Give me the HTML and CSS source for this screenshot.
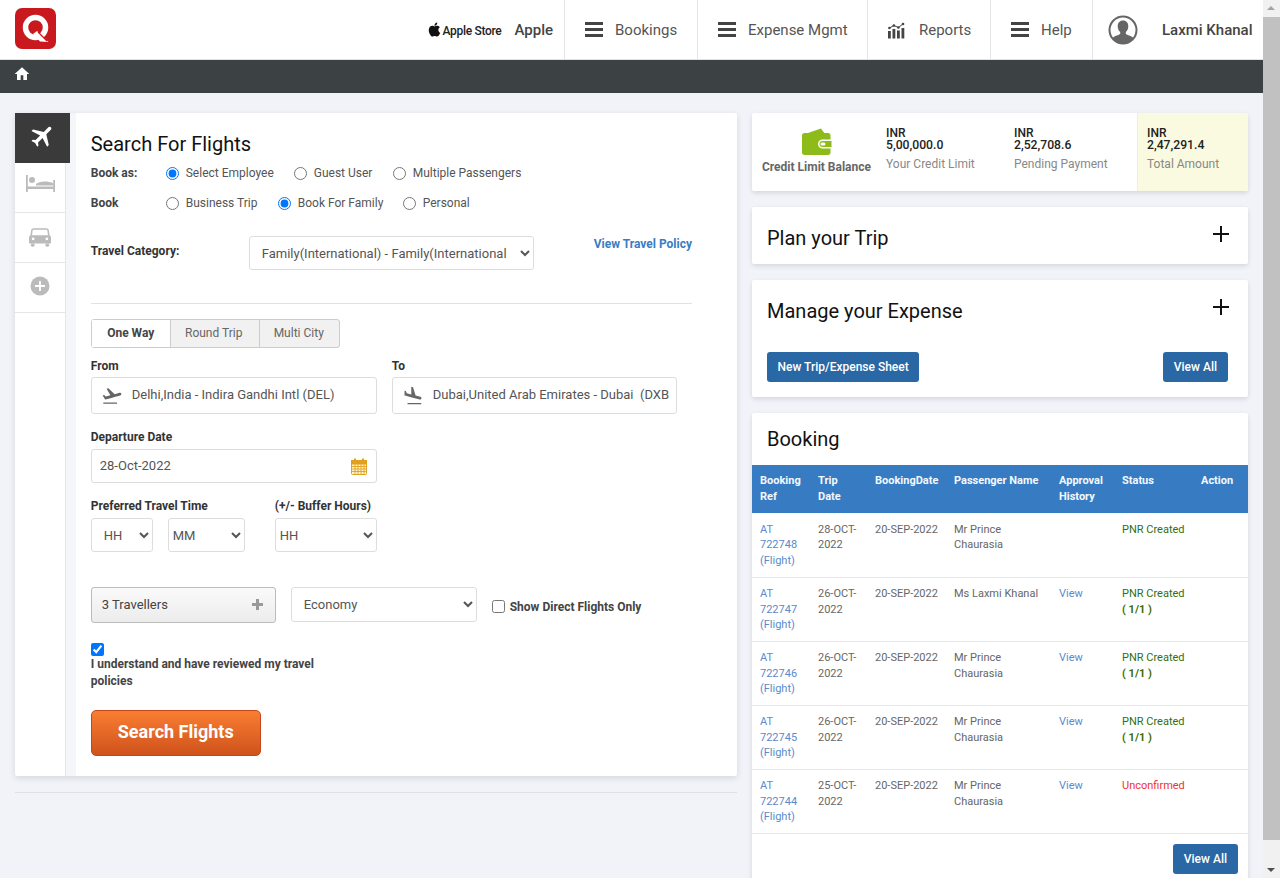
FILE: index.html
```html
<!DOCTYPE html>
<html>
<head>
  <title>Search For Flights</title>
  <link rel="stylesheet" href="styles.css">
</head>
<body>
<div class="page">
  <header class="topbar">
    <div class="logo">
      <svg width="41" height="41" viewBox="0 0 41 41">
        <rect width="41" height="41" rx="7" fill="#c9191e"/>
        <circle cx="20.500" cy="19.500" r="10" fill="none" stroke="#fff" stroke-width="5.500"/>
        <path d="M22 23 L33.500 34 L25 33.500 L18 26 Z" fill="#fff"/>
        <path d="M23 24 L32 33" stroke="#c9191e" stroke-width="1.300"/>
      </svg>
    </div>
    <nav class="nav">
      <div class="nav-client">
        <svg width="17" height="17" viewBox="0 0 24 24" fill="#111"><path d="M18.710 19.500c-.83 1.240-1.710 2.450-3.050 2.470-1.340.03-1.770-.79-3.290-.79-1.530 0-2 .77-3.270.82-1.310.05-2.300-1.320-3.140-2.530C4.250 17 2.940 12.450 4.700 9.390c.87-1.520 2.430-2.480 4.120-2.510 1.280-.02 2.500.87 3.290.87.78 0 2.260-1.070 3.810-.91.65.03 2.470.26 3.640 1.980-.09.06-2.170 1.280-2.150 3.810.03 3.020 2.650 4.030 2.680 4.040-.03.07-.42 1.440-1.380 2.830M13 3.500c.73-.83 1.940-1.460 2.940-1.500.13 1.170-.34 2.350-1.040 3.190-.69.85-1.830 1.510-2.950 1.420-.15-1.150.41-2.350 1.050-3.110z"/></svg>
        <span class="store-name">Apple Store</span>
        <span class="client-name">Apple</span>
      </div>
      <a class="nav-item nav-bookings"><span class="bars"></span>Bookings</a>
      <a class="nav-item nav-expense"><span class="bars"></span>Expense Mgmt</a>
      <a class="nav-item nav-reports">
        <svg class="nav-icon" width="19" height="18" viewBox="0 0 19 18" fill="#444">
          <rect x="1" y="10" width="2.800" height="7.500"/><rect x="5.500" y="8" width="2.800" height="9.500"/><rect x="10" y="9.500" width="2.800" height="8"/><rect x="14.500" y="7" width="2.800" height="10.500"/>
          <path d="M2.400 7 L6.900 4.500 L11.400 6.500 L16 3" fill="none" stroke="#444" stroke-width="1"/>
          <circle cx="2.400" cy="7" r="1.300"/><circle cx="6.900" cy="4.500" r="1.300"/><circle cx="11.400" cy="6.500" r="1.300"/><circle cx="16" cy="3" r="1.300"/>
        </svg>Reports</a>
      <a class="nav-item nav-help"><span class="bars"></span>Help</a>
      <div class="nav-user">
        <svg width="30" height="30" viewBox="0 0 30 30">
          <circle cx="15" cy="15" r="13.500" fill="#fff" stroke="#666" stroke-width="2"/>
          <path d="M15 5.500c3.400 0 5.300 2.500 5.300 5.800 0 2.600-1.100 4.600-2.500 5.800v2c1.200 1 5.700 1.800 7.600 4A13 13 0 0 1 15 28.500a13 13 0 0 1-10.400-5.400c1.900-2.200 6.400-3 7.600-4v-2c-1.400-1.200-2.500-3.200-2.500-5.800 0-3.300 1.900-5.800 5.300-5.800z" fill="#666"/>
        </svg>
        <span class="user-name">Laxmi Khanal</span>
      </div>
    </nav>
  </header>
  <div class="crumbs">
    <svg width="16" height="16" viewBox="0 0 24 24" fill="#fff"><path d="M10 21v-7h4v7h5.500v-9H23L12 2 1 12h3.500v9z"/></svg>
  </div>

  <main class="content">
    <section class="left-col">
      <div class="search-panel">
        <div class="side-tabs">
          <div class="side-tab active">
            <svg width="28" height="28" viewBox="0 0 24 24" fill="#fff"><path transform="rotate(45 12 12)" d="M21 16v-2l-8-5V3.500c0-.83-.67-1.500-1.500-1.500S10 2.670 10 3.500V9l-8 5v2l8-2.500V19l-2 1.500V22l3.500-1 3.500 1v-1.500L13 19v-5.500l8 2.500z"/></svg>
          </div>
          <div class="side-tab tab-bed">
            <svg width="29" height="17" viewBox="0 0 29 17" fill="#bbb">
              <rect x="0" y="0" width="1.800" height="17"/><rect x="27.200" y="5" width="1.800" height="12"/>
              <rect x="0" y="11.500" width="29" height="2.500"/><circle cx="6" cy="5" r="3"/>
              <path d="M10 9c3-3 12-3.500 17.500-.500v2H10z"/>
            </svg>
          </div>
          <div class="side-tab tab-car">
            <svg width="22" height="21" viewBox="0 0 24 23" fill="#bbb">
              <path d="M5 1.500h14c1.500 0 2.500 1 2.800 2.500l.7 5c1 .5 1.500 1.300 1.500 2.500V18H0v-6.500C0 10.300.5 9.500 1.500 9l.7-5C2.500 2.500 3.500 1.500 5 1.500zm.3 1.500c-.8 0-1.300.5-1.500 1.300L3.300 9h17.400l-.5-4.700c-.2-.8-.7-1.300-1.500-1.300z"/>
              <circle cx="4.500" cy="13" r="1.500" fill="#fff"/><circle cx="19.500" cy="13" r="1.500" fill="#fff"/>
              <rect x="2" y="18" width="4" height="3.500" rx="1.500"/><rect x="18" y="18" width="4" height="3.500" rx="1.500"/>
            </svg>
          </div>
          <div class="side-tab">
            <svg width="20" height="20" viewBox="0 0 20 20"><circle cx="10" cy="10" r="9.500" fill="#bbb"/><path d="M10 5v10M5 10h10" stroke="#fff" stroke-width="1.800"/></svg>
          </div>
        </div>
        <div class="side-gap"></div>
        <form class="search-form">
          <h1 class="form-title">Search For Flights</h1>
          <div class="radio-row">
            <span class="radio-label">Book as:</span>
            <label class="radio r-employee"><input type="radio" name="bookas" checked>Select Employee</label>
            <label class="radio r-guest"><input type="radio" name="bookas">Guest User</label>
            <label class="radio"><input type="radio" name="bookas">Multiple Passengers</label>
          </div>
          <div class="radio-row">
            <span class="radio-label">Book</span>
            <label class="radio r-business"><input type="radio" name="book">Business Trip</label>
            <label class="radio r-family"><input type="radio" name="book" checked>Book For Family</label>
            <label class="radio"><input type="radio" name="book">Personal</label>
          </div>
          <div class="category-row">
            <label class="field-label category-label">Travel Category:</label>
            <select class="select category-select"><option>Family(International) - Family(International</option></select>
            <a class="policy-link">View Travel Policy</a>
          </div>
          <hr class="form-rule">
          <div class="trip-tabs">
            <span class="trip-tab current">One Way</span>
            <span class="trip-tab tab-round">Round Trip</span>
            <span class="trip-tab tab-multi">Multi City</span>
          </div>
          <div class="city-row">
            <div>
              <label class="field-label">From</label>
              <div class="city-box">
                <svg width="22" height="22" viewBox="0 0 24 24" fill="#666"><path d="M2.500 19h15v1.500h-15zm19.570-9.360c-.21-.8-1.040-1.280-1.840-1.060L14.920 10l-6.900-6.430-1.930.51 4.140 7.170-4.970 1.330-1.970-1.540-1.450.39 1.820 3.160.77 1.330 1.600-.43 5.310-1.420 4.350-1.160L21 11.490c.81-.23 1.280-1.050 1.070-1.850z"/></svg>
                <input class="city-input" type="text" readonly value="Delhi,India - Indira Gandhi Intl (DEL)">
              </div>
            </div>
            <div>
              <label class="field-label">To</label>
              <div class="city-box">
                <svg width="22" height="22" viewBox="0 0 24 24" fill="#666"><path d="M6 19.500h15V21H6zm3.680-6.230l4.350 1.160 5.310 1.420c.8.210 1.620-.26 1.840-1.060.21-.8-.26-1.620-1.060-1.840l-5.310-1.420-2.760-9.020L10.120 2v8.280L5.150 8.950l-.93-2.320-1.450-.39v5.170l1.600.43 5.310 1.430z"/></svg>
                <input class="city-input" type="text" readonly value="Dubai,United Arab Emirates - Dubai  (DXB)">
              </div>
            </div>
          </div>
          <label class="field-label departure-label">Departure Date</label>
          <div class="date-box">
            <span class="date-text">28-Oct-2022</span>
            <svg width="16" height="17" viewBox="0 0 16 17">
              <rect x="0.500" y="2.500" width="15" height="14" rx="1" fill="#fdf3d4" stroke="#e2a11c"/>
              <rect x="0.500" y="2.500" width="15" height="3.500" fill="#e2a11c" stroke="#e2a11c"/>
              <rect x="3" y="0.500" width="2" height="3.500" fill="#e2a11c"/><rect x="11" y="0.500" width="2" height="3.500" fill="#e2a11c"/>
              <path d="M1 8.500h14M1 11h14M1 13.500h14M4 6v10M7 6v10M10 6v10M13 6v10" stroke="#e2a11c" stroke-width="0.900"/>
            </svg>
          </div>
          <div class="time-row">
            <div class="time-col">
              <label class="field-label">Preferred Travel Time</label>
              <div class="time-selects">
                <select class="select sel-hh"><option>HH</option></select>
                <select class="select sel-mm"><option>MM</option></select>
              </div>
            </div>
            <div class="buffer-col">
              <label class="field-label">(+/- Buffer Hours)</label>
              <select class="select sel-buffer"><option>HH</option></select>
            </div>
          </div>
          <div class="traveller-row">
            <div class="travellers-btn"><span>3 Travellers</span><span class="plus-mark"></span></div>
            <select class="select sel-class"><option>Economy</option></select>
            <label class="direct-check"><input type="checkbox"><span class="direct-text">Show Direct Flights Only</span></label>
          </div>
          <label class="policy-check">
            <input type="checkbox" checked>
            <span>I understand and have reviewed my travel policies</span>
          </label>
          <button type="button" class="search-btn">Search Flights</button>
        </form>
      </div>
      <div class="left-rule"></div>
    </section>

    <section class="right-col">
      <div class="card credit-card">
        <div class="credit-title">
          <svg width="30" height="27" viewBox="0 0 30 27">
            <path d="M3 6 L19 0.500 L23 6z" fill="#8cbb1a"/>
            <path d="M2.500 5h23.500c1.500 0 2.500 1 2.500 2.500v17c0 1.500-1 2.500-2.500 2.500H2.500C1 27 0 26 0 24.500v-17C0 6 1 5 2.500 5z" fill="#8cbb1a"/>
            <path d="M29.500 11.500h-9a4.500 4.500 0 0 0 0 9h9z" fill="#fff"/>
            <path d="M29.500 13h-9a3 3 0 0 0 0 6h9z" fill="#8cbb1a"/>
            <rect x="18.500" y="14.500" width="5" height="3" rx="1.500" fill="#fff"/>
          </svg>
          <span>Credit Limit Balance</span>
        </div>
        <div class="credit-col col-limit">
          <div class="credit-amt"><span class="credit-cur">INR</span><b>5,00,000.0</b></div>
          <div class="credit-note">Your Credit Limit</div>
        </div>
        <div class="credit-col col-pending">
          <div class="credit-amt"><span class="credit-cur">INR</span><b>2,52,708.6</b></div>
          <div class="credit-note">Pending Payment</div>
        </div>
        <div class="credit-col col-total">
          <div class="credit-amt"><span class="credit-cur">INR</span><b>2,47,291.4</b></div>
          <div class="credit-note">Total Amount</div>
        </div>
      </div>

      <div class="card plan-card">
        <h2 class="card-title">Plan your Trip</h2>
        <span class="big-plus"></span>
      </div>

      <div class="card manage-card">
        <div class="manage-head">
          <h2 class="card-title">Manage your Expense</h2>
          <span class="big-plus"></span>
        </div>
        <div class="manage-actions">
          <a class="btn-blue btn-new">New Trip/Expense Sheet</a>
          <a class="btn-blue">View All</a>
        </div>
      </div>

      <div class="card booking-card">
        <h2 class="card-title booking-title">Booking</h2>
        <table class="booking-table">
          <colgroup>
            <col class="c-ref"><col class="c-trip"><col class="c-date"><col class="c-name"><col class="c-appr"><col class="c-status"><col class="c-action">
          </colgroup>
          <thead>
            <tr><th>Booking Ref</th><th>Trip Date</th><th>BookingDate</th><th>Passenger Name</th><th>Approval History</th><th>Status</th><th>Action</th></tr>
          </thead>
          <tbody>
            <tr>
              <td><a>AT 722748 (Flight)</a></td><td>28-OCT-2022</td><td>20-SEP-2022</td><td>Mr Prince Chaurasia</td><td></td>
              <td><span class="ok">PNR Created</span></td><td></td>
            </tr>
            <tr>
              <td><a>AT 722747 (Flight)</a></td><td>26-OCT-2022</td><td>20-SEP-2022</td><td>Ms Laxmi Khanal</td><td><a>View</a></td>
              <td><span class="ok">PNR Created</span><b class="count">( 1/1 )</b></td><td></td>
            </tr>
            <tr>
              <td><a>AT 722746 (Flight)</a></td><td>26-OCT-2022</td><td>20-SEP-2022</td><td>Mr Prince Chaurasia</td><td><a>View</a></td>
              <td><span class="ok">PNR Created</span><b class="count">( 1/1 )</b></td><td></td>
            </tr>
            <tr>
              <td><a>AT 722745 (Flight)</a></td><td>26-OCT-2022</td><td>20-SEP-2022</td><td>Mr Prince Chaurasia</td><td><a>View</a></td>
              <td><span class="ok">PNR Created</span><b class="count">( 1/1 )</b></td><td></td>
            </tr>
            <tr>
              <td><a>AT 722744 (Flight)</a></td><td>25-OCT-2022</td><td>20-SEP-2022</td><td>Mr Prince Chaurasia</td><td><a>View</a></td>
              <td><span class="bad">Unconfirmed</span></td><td></td>
            </tr>
          </tbody>
        </table>
        <div class="booking-foot"><a class="btn-blue">View All</a></div>
      </div>
    </section>
  </main>
</div>

<div class="scrollbar">
  <span class="arrow-up"></span>
  <span class="thumb"></span>
  <span class="arrow-down"></span>
</div>
</body>
</html>
```

FILE: styles.css
```css
html, body {
  margin: 0;
  height: 878px;
  overflow: hidden;
}

body {
  font-family: Roboto, Arial, sans-serif;
  font-size: 12px;
  color: #555;
  background: #f1f3f8;
}

.page {
  width: 1263px;
}

/* top bar */
.topbar {
  display: flex;
  justify-content: space-between;
  height: 59px;
  background: #fff;
  border-bottom: 1px solid #e2e2e2;
}

.logo {
  padding: 8px 0 0 15px;
}

.nav {
  display: flex;
  align-items: stretch;
}

.nav-client {
  display: flex;
  align-items: center;
  padding-right: 11px;
  color: #222;
}

.store-name {
  margin-left: -1px;
  font-size: 12px;
  font-weight: 500;
  letter-spacing: -0.3px;
  margin-top: 2px;
}

.client-name {
  margin-left: 13px;
  font-size: 15px;
  font-weight: 500;
  color: #444;
}

.nav-item {
  display: flex;
  align-items: center;
  border-left: 1px solid #e4e4e4;
  font-size: 15px;
  color: #555;
}

.nav-bookings { width: 133px; padding-left: 20px; box-sizing: border-box; }
.nav-expense { width: 170px; padding-left: 20px; box-sizing: border-box; }
.nav-reports { width: 123px; padding-left: 19px; box-sizing: border-box; }
.nav-help { width: 102px; padding-left: 20px; box-sizing: border-box; }

.bars {
  width: 18px;
  height: 15px;
  margin-right: 12px;
  background: linear-gradient(#444 0 3px, transparent 3px 6px, #444 6px 9px, transparent 9px 12px, #444 12px 15px);
}

.nav-icon {
  margin-right: 13px;
}

.nav-user {
  display: flex;
  align-items: center;
  width: 171px;
  box-sizing: border-box;
  padding-left: 15px;
  border-left: 1px solid #e4e4e4;
}

.user-name {
  margin-left: 24px;
  font-size: 15px;
  font-weight: 500;
  color: #444;
}

.crumbs {
  display: flex;
  align-items: flex-start;
  height: 33px;
  padding: 6px 0 0 14px;
  box-sizing: border-box;
  background: #3c4144;
}

/* main layout */
.content {
  display: flex;
  gap: 15px;
  padding: 20px 15px 0;
}

.left-col {
  width: 722px;
}

.right-col {
  width: 496px;
  display: flex;
  flex-direction: column;
  gap: 16px;
}

.search-panel {
  display: flex;
  height: 663px;
  background: #fff;
  box-shadow: 0 2px 6px rgba(0, 0, 0, 0.12);
  border-radius: 2px;
}

.side-tabs {
  width: 51px;
  border-right: 1px solid #e6e6e6;
  box-sizing: border-box;
}

.side-tab {
  display: flex;
  align-items: center;
  justify-content: center;
  height: 50px;
  box-sizing: border-box;
  border-bottom: 1px solid #e6e6e6;
  padding-bottom: 4px;
}

.side-tab.active {
  position: relative;
  z-index: 1;
  width: 55px;
  background: #3a3a3a;
  border-bottom: 0;
}

.tab-bed { padding-bottom: 8px; }
.tab-car { padding-bottom: 0; }

.side-gap {
  width: 10px;
  background: #f5f6f9;
}

.search-form {
  flex: 1;
  padding: 19px 45px 0 15px;
}

.form-title {
  margin: 0;
  font-size: 20px;
  font-weight: 400;
  line-height: 24px;
  color: #111;
}

.radio-row {
  display: flex;
  align-items: center;
  height: 30px;
}

.radio-row:first-of-type {
  margin-top: 2px;
}

.radio-label {
  width: 75px;
  font-weight: 700;
  color: #444;
}

.radio {
  display: flex;
  align-items: center;
  color: #555;
}

.radio input {
  width: 13px;
  height: 13px;
  margin: 0 7px 0 0;
}

.r-employee { width: 128px; }
.r-guest { width: 99px; }
.r-business { width: 112px; }
.r-family { width: 125px; }

.category-row {
  display: flex;
  margin-top: 18px;
  height: 34px;
}

.field-label {
  display: block;
  font-size: 12px;
  font-weight: 700;
  line-height: 16px;
  color: #333;
}

.category-label {
  width: 158px;
  margin-top: 7px;
}

.select {
  height: 34px;
  border: 1px solid #ddd;
  border-radius: 3px;
  background: #fff;
  font-family: Roboto, Arial, sans-serif;
  font-size: 13px;
  color: #555;
}

.category-select {
  width: 285px;
  padding-left: 8px;
}

.policy-link {
  margin: 0 0 0 60px;
  font-weight: 700;
  line-height: 16px;
  white-space: nowrap;
  color: #3a7cc4;
}

.form-rule {
  margin: 33px 0 15px;
  border: 0;
  border-top: 1px solid #e2e2e2;
}

.trip-tabs {
  display: flex;
  width: 249px;
  height: 29px;
  box-sizing: border-box;
  border: 1px solid #ccc;
  border-radius: 3px;
  background: #f1f1f1;
}

.trip-tab {
  display: flex;
  align-items: center;
  justify-content: center;
  width: 89px;
  box-sizing: border-box;
  padding-bottom: 2px;
  border-left: 1px solid #ccc;
  color: #666;
}

.trip-tab.current {
  width: 78px;
  border-left: 0;
  background: #fff;
  font-weight: 700;
  color: #444;
}

.trip-tab.tab-round {
  padding-right: 2px;
}

.trip-tab.tab-multi {
  width: 80px;
  padding-right: 1px;
}

.city-row {
  display: grid;
  grid-template-columns: 286px 285px;
  gap: 15px;
  margin-top: 10px;
}

.city-box {
  display: flex;
  align-items: center;
  height: 37px;
  margin-top: 3px;
  box-sizing: border-box;
  padding-left: 9px;
  border: 1px solid #ddd;
  border-radius: 3px;
}

.city-input {
  flex: 1;
  min-width: 0;
  margin: 0 0 2px 9px;
  padding: 0 7px 0 0;
  border: 0;
  outline: 0;
  font-family: Roboto, Arial, sans-serif;
  font-size: 13px;
  color: #555;
}

.departure-label {
  margin-top: 15px;
}

.date-box {
  display: flex;
  align-items: center;
  justify-content: space-between;
  width: 286px;
  height: 34px;
  margin-top: 4px;
  box-sizing: border-box;
  padding: 0 9px 0 8px;
  border: 1px solid #ddd;
  border-radius: 3px;
  font-size: 13px;
  color: #555;
}

.date-text {
  margin-bottom: 1px;
}

.time-row {
  display: flex;
  margin-top: 15px;
}

.time-col {
  width: 184px;
}

.time-selects {
  display: flex;
  gap: 15px;
  margin-top: 4px;
}

.sel-hh { width: 62px; padding-left: 8px; }
.sel-mm { width: 77px; }
.sel-buffer { width: 102px; margin-top: 4px; }

.traveller-row {
  display: flex;
  margin-top: 35px;
}

.travellers-btn {
  display: flex;
  align-items: center;
  justify-content: space-between;
  width: 185px;
  height: 36px;
  box-sizing: border-box;
  padding: 0 12px 1px 10px;
  border: 1px solid #bbb;
  border-radius: 3px;
  background: linear-gradient(#fafafa, #ececec);
  font-size: 13px;
  color: #444;
}

.plus-mark {
  width: 11px;
  height: 11px;
  background: linear-gradient(#999, #999) center / 11px 3px no-repeat, linear-gradient(#999, #999) center / 3px 11px no-repeat;
}

.sel-class {
  width: 186px;
  height: 35px;
  margin-left: 15px;
  padding-left: 8px;
}

.direct-check {
  display: flex;
  align-items: center;
  margin: 7px 0 0 15px;
  height: 24px;
  font-weight: 700;
  color: #444;
}

.direct-check input {
  width: 13px;
  height: 13px;
  margin: 0 5px 0 0;
}

.direct-text {
  margin-top: 2px;
}

.policy-check {
  display: block;
  width: 240px;
  margin-top: 20px;
  font-weight: 700;
  line-height: 17px;
  color: #444;
}

.policy-check input {
  display: block;
  width: 13px;
  height: 13px;
  margin: 0;
}

.search-btn {
  display: block;
  width: 170px;
  height: 46px;
  margin-top: 20px;
  padding: 0 0 4px;
  border: 1px solid #c0481a;
  border-radius: 5px;
  background: linear-gradient(#f97e32, #cf521c);
  font-family: Roboto, Arial, sans-serif;
  font-size: 18px;
  font-weight: 700;
  color: #fff;
}

.left-rule {
  margin-top: 16px;
  border-top: 1px solid #dfe1e5;
}

/* right column */
.card {
  background: #fff;
  border-radius: 2px;
  box-shadow: 0 2px 5px rgba(0, 0, 0, 0.12);
}

.credit-card {
  display: flex;
  height: 78px;
}

.credit-title {
  display: flex;
  flex-direction: column;
  align-items: center;
  width: 129px;
  padding-top: 15px;
  box-sizing: border-box;
  font-weight: 700;
  color: #666;
}

.credit-title span {
  margin-top: 5px;
  white-space: nowrap;
}

.credit-col {
  padding-top: 14px;
  box-sizing: border-box;
}

.col-limit { width: 128px; margin-left: 5px; }
.col-pending { width: 123px; }

.col-total {
  width: 111px;
  padding-left: 9px;
  background: #fafae0;
  border-left: 1px solid #ececec;
}

.credit-amt {
  font-weight: 500;
  color: #222;
}

.credit-cur {
  display: block;
  height: 12px;
  line-height: 12px;
}

.credit-amt b {
  display: block;
  height: 12px;
  line-height: 12px;
  font-size: 12.200px;
  font-weight: 500;
}

.credit-note {
  margin-top: 5px;
  color: #888;
  line-height: 16px;
}

.plan-card {
  display: flex;
  justify-content: space-between;
  height: 57px;
  padding: 19px 19px 0 15px;
  box-sizing: border-box;
}

.card-title {
  margin: 0;
  font-size: 20px;
  font-weight: 400;
  line-height: 24px;
  color: #111;
}

.big-plus {
  width: 16px;
  height: 16px;
  background: linear-gradient(#111, #111) center / 16px 2px no-repeat, linear-gradient(#111, #111) center / 2px 16px no-repeat;
}

.manage-card {
  height: 117px;
  padding: 19px 20px 0 15px;
  box-sizing: border-box;
}

.manage-head {
  display: flex;
  justify-content: space-between;
  margin-right: -1px;
}

.manage-actions {
  display: flex;
  justify-content: space-between;
  margin-top: 29px;
}

.btn-blue {
  display: inline-block;
  height: 30px;
  padding: 0 11px;
  border-radius: 3px;
  background: #2a67a5;
  font-weight: 500;
  line-height: 30px;
  color: #fff;
}

.btn-new {
  padding: 0 10.500px;
}

.booking-card {
  height: 600px;
}

.booking-title {
  padding: 14px 15px;
}

.booking-table {
  width: 496px;
  table-layout: fixed;
  border-collapse: collapse;
  font-size: 11px;
}

.c-ref { width: 58px; }
.c-trip { width: 57px; }
.c-date { width: 79px; }
.c-name { width: 105px; }
.c-appr { width: 63px; }
.c-status { width: 79px; }
.c-action { width: 55px; }

.booking-table th {
  height: 48px;
  box-sizing: border-box;
  padding: 8px;
  background: #377cc3;
  font-weight: 700;
  line-height: 16px;
  text-align: left;
  vertical-align: top;
  color: #f4f8fc;
}

.booking-table td {
  height: 64px;
  box-sizing: border-box;
  padding: 8.500px 8px 7.500px;
  border-bottom: 1px solid #e8e8e8;
  line-height: 15.600px;
  vertical-align: top;
  color: #666;
}

.booking-table a {
  color: #5b8ac9;
}

.ok {
  color: #2f7010;
}

.count {
  display: block;
  color: #3d7000;
}

.bad {
  color: #ee3333;
}

.booking-foot {
  display: flex;
  justify-content: flex-end;
  padding: 10px 10px 0 0;
}

/* window scrollbar */
.scrollbar {
  position: fixed;
  top: 0;
  right: 0;
  bottom: 0;
  width: 17px;
  background: #f1f1f1;
}

.thumb {
  position: absolute;
  top: 17px;
  left: 0;
  right: 0;
  height: 823px;
  background: #c1c1c1;
}

.arrow-up,
.arrow-down {
  position: absolute;
  left: 4px;
  width: 0;
  height: 0;
  border-left: 4px solid transparent;
  border-right: 4px solid transparent;
}

.arrow-up {
  top: 6px;
  border-bottom: 4px solid #a3a3a3;
}

.arrow-down {
  bottom: 6px;
  border-top: 4px solid #505050;
}
```
